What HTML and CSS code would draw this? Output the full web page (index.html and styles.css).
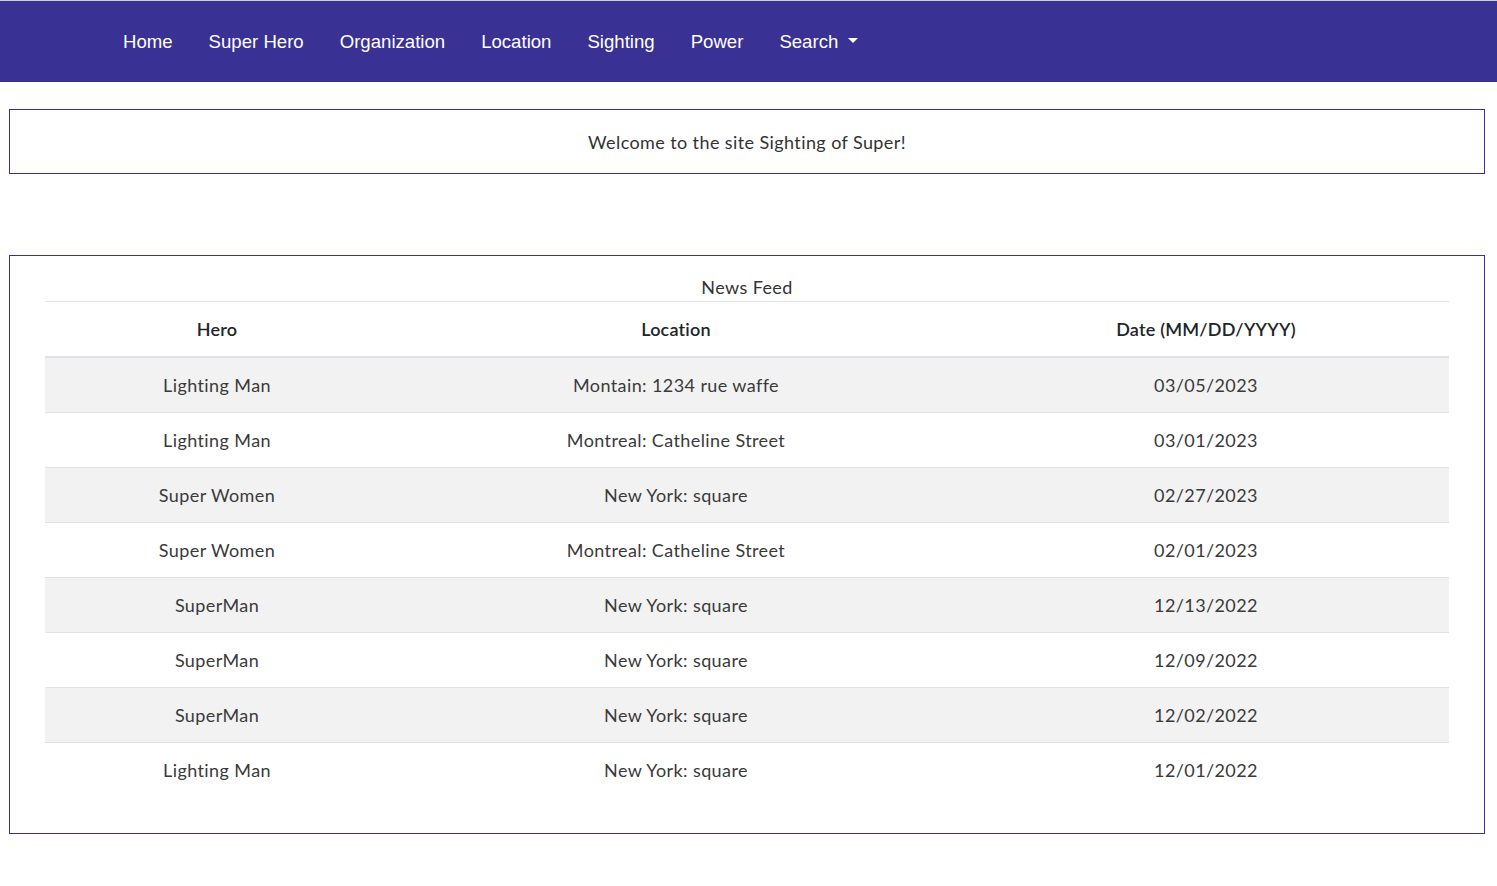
FILE: index.html
```html
<!DOCTYPE html>
<html lang="en">
<head>
<meta charset="utf-8">
<title>Super Hero Sightings</title>
<link rel="stylesheet" href="styles.css">
</head>
<body>
<nav class="navbar">
  <ul class="nav-list">
    <li><a class="nav-link" href="#">Home</a></li>
    <li><a class="nav-link" href="#">Super Hero</a></li>
    <li><a class="nav-link" href="#">Organization</a></li>
    <li><a class="nav-link" href="#">Location</a></li>
    <li><a class="nav-link" href="#">Sighting</a></li>
    <li><a class="nav-link" href="#">Power</a></li>
    <li><a class="nav-link dropdown" href="#">Search <span class="caret"></span></a></li>
  </ul>
</nav>
<main class="main">
  <section class="welcome">Welcome to the site Sighting of Super!</section>
  <section class="feed">
    <div class="caption">News Feed</div>
    <table class="table">
      <colgroup>
        <col class="c-hero"><col class="c-loc"><col class="c-date">
      </colgroup>
      <thead>
        <tr><th>Hero</th><th>Location</th><th>Date (MM/DD/YYYY)</th></tr>
      </thead>
      <tbody>
        <tr><td>Lighting Man</td><td>Montain: 1234 rue waffe</td><td>03/05/2023</td></tr>
        <tr><td>Lighting Man</td><td>Montreal: Catheline Street</td><td>03/01/2023</td></tr>
        <tr><td>Super Women</td><td>New York: square</td><td>02/27/2023</td></tr>
        <tr><td>Super Women</td><td>Montreal: Catheline Street</td><td>02/01/2023</td></tr>
        <tr><td>SuperMan</td><td>New York: square</td><td>12/13/2022</td></tr>
        <tr><td>SuperMan</td><td>New York: square</td><td>12/09/2022</td></tr>
        <tr><td>SuperMan</td><td>New York: square</td><td>12/02/2022</td></tr>
        <tr><td>Lighting Man</td><td>New York: square</td><td>12/01/2022</td></tr>
      </tbody>
    </table>
  </section>
</main>
</body>
</html>
```
FILE: styles.css
```css
* { box-sizing: border-box; }
html, body { margin: 0; padding: 0; background: #fff; }
body {
  font-family: "Lato", "Open Sans", sans-serif;
  color: #333;
  font-size: 18px;
  border-top: 1px solid #cfcfcf;
}
.navbar {
  background: #393193;
  height: 81px;
  display: flex;
  align-items: center;
  padding-left: 105px;
}
.nav-list {
  list-style: none;
  margin: 0;
  padding: 0;
  display: flex;
}
.nav-link {
  display: flex;
  align-items: center;
  padding: 0 18px;
  color: #fff;
  text-decoration: none;
  font-family: "Liberation Sans", Arial, sans-serif;
  font-size: 18.6px;
  line-height: 24px;
}
.caret {
  display: inline-block;
  width: 0;
  height: 0;
  margin-left: 10px;
  border-left: 5px solid transparent;
  border-right: 5px solid transparent;
  border-top: 5px solid #fff;
  margin-top: -2px;
}
.main {
  padding: 27px 12px 0 9px;
}
.welcome {
  border: 1px solid #393193;
  height: 65px;
  display: flex;
  align-items: center;
  justify-content: center;
  font-size: 18px;
  color: #333;
  letter-spacing: 0.4px;
}
.feed {
  margin-top: 81px;
  border: 1px solid #393193;
  padding: 18px 35px 36px;
  letter-spacing: 0.4px;
}
.caption {
  text-align: center;
  line-height: 27px;
  color: #333;
  font-size: 18px;
}
.table {
  width: 100%;
  border-collapse: collapse;
  table-layout: fixed;
}
.c-hero { width: 344px; }
.c-loc { width: 574px; }
.c-date { width: 486px; }
.table th, .table td {
  text-align: center;
  padding: 15px;
  line-height: 24px;
  border-top: 1px solid #dee2e6;
  font-size: 18px;
}
.table th {
  font-weight: 600;
  color: #212529;
  letter-spacing: 0.2px;
}
.table td { color: #3a3a3a; }
.table thead th { border-bottom: 2px solid #dee2e6; }
.table tbody tr:nth-child(odd) { background: #f2f2f2; }
```
